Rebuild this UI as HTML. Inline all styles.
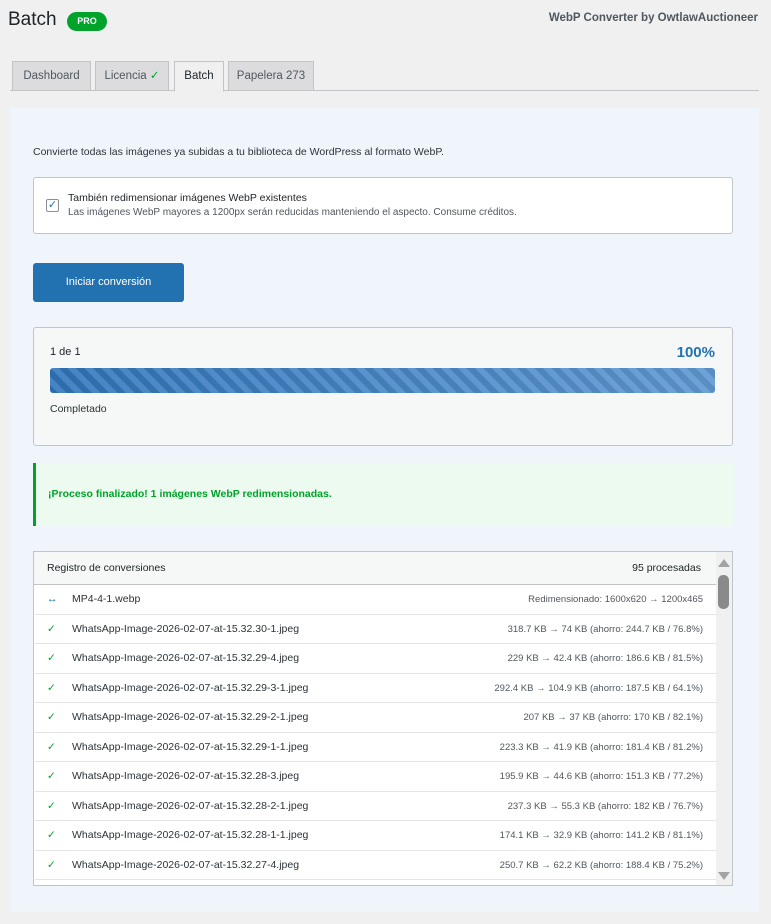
<!DOCTYPE html>
<html><head><meta charset="utf-8"><style>
*{box-sizing:border-box;margin:0;padding:0}
body{width:771px;height:924px;background:#f0f0f1;font-family:"Liberation Sans",sans-serif;color:#1d2327;position:relative;overflow:hidden;font-size:11px}
.abs{position:absolute}
.tab{position:absolute;top:61px;height:30px;border:1px solid #c3c4c7;background:#dcdcde;font-size:11.5px;color:#50575e;line-height:29px;text-align:center}
.row{position:absolute;left:1px;width:681px;height:29.5px;border-bottom:1px solid #e5e5e5;font-size:10.5px;line-height:29px;background:#fff}
.row .i{position:absolute;left:12px;color:#00a32a}
.row .n{position:absolute;left:37px;color:#2c3338}
.row .r{position:absolute;right:13px;color:#50575e;font-size:9.5px}
</style></head><body>
<div class="abs" style="left:8px;top:9px;font-size:19px;color:#1d2327">Batch</div>
<div class="abs" style="left:67px;top:12px;width:40px;height:19px;border-radius:10px;background:#00a32a;color:#fff;font-size:9px;font-weight:bold;text-align:center;line-height:19px">PRO</div>
<div class="abs" style="right:13px;top:12px;font-size:11.5px;font-weight:bold;color:#50575e">WebP Converter by OwtlawAuctioneer</div>
<div class="abs" style="left:10px;top:90px;width:749px;height:1px;background:#c3c4c7"></div>
<div class="tab" style="left:12px;width:79px">Dashboard</div>
<div class="tab" style="left:95px;width:74px">Licencia <span style="color:#00a32a">✓</span></div>
<div class="tab" style="left:174px;width:50px;background:#f0f0f1;border-bottom-color:#f0f0f1;color:#1d2327;height:31px">Batch</div>
<div class="tab" style="left:228px;width:86px">Papelera 273</div>
<div class="abs" style="left:10px;top:108px;width:749px;height:804px;background:#f0f5fc"></div>
<div class="abs" style="left:33px;top:146px;font-size:10.5px;color:#2c3338">Convierte todas las imágenes ya subidas a tu biblioteca de WordPress al formato WebP.</div>
<div class="abs" style="left:33px;top:177px;width:700px;height:57px;background:#fff;border:1px solid #c3c4c7;border-radius:3px"></div>
<div class="abs" style="left:46px;top:199px;width:13px;height:13px;border:1px solid #8c8f94;border-radius:2px;background:#fff;color:#2271b1;font-size:11px;line-height:11px;text-align:center">✓</div>
<div class="abs" style="left:68px;top:192px;font-size:10.5px;color:#1d2327">También redimensionar imágenes WebP existentes</div>
<div class="abs" style="left:68px;top:207px;font-size:10px;color:#50575e">Las imágenes WebP mayores a 1200px serán reducidas manteniendo el aspecto. Consume créditos.</div>
<div class="abs" style="left:33px;top:263px;width:151px;height:39px;background:#2271b1;border-radius:3px;color:#fff;font-size:11px;text-align:center;line-height:39px">Iniciar conversión</div>
<div class="abs" style="left:33px;top:327px;width:700px;height:119px;background:#f6f7f7;border:1px solid #c3c4c7;border-radius:3px"></div>
<div class="abs" style="left:50px;top:346px;font-size:11px;color:#1d2327">1 de 1</div>
<div class="abs" style="right:56px;top:344px;font-size:15px;font-weight:bold;color:#2271b1">100%</div>
<div class="abs" style="left:50px;top:368px;width:665px;height:25px;border-radius:3px;background:repeating-linear-gradient(45deg,#2f72b4 0 6px,#4a8bcd 6px 12px),linear-gradient(90deg,#2a6db0,#5aa0dc);background-blend-mode:normal"></div>
<div class="abs" style="left:50px;top:368px;width:665px;height:25px;border-radius:3px;background:linear-gradient(90deg,rgba(0,0,0,0.05),rgba(255,255,255,0.2))"></div>
<div class="abs" style="left:50px;top:403px;font-size:10.5px;color:#2c3338">Completado</div>
<div class="abs" style="left:33px;top:463px;width:700px;height:63px;background:#edfaef;border-left:3px solid #00a32a"></div>
<div class="abs" style="left:48px;top:488px;font-size:10.5px;font-weight:bold;color:#00a32a">¡Proceso finalizado! 1 imágenes WebP redimensionadas.</div>
<div class="abs" style="left:33px;top:551px;width:700px;height:335px;background:#fff;border:1px solid #c3c4c7;overflow:hidden">
<div class="abs" style="left:0;top:0;width:682px;height:33px;background:#f6f7f7;border-bottom:1px solid #c3c4c7"></div>
<div class="abs" style="left:13px;top:10px;font-size:10.5px;color:#1d2327">Registro de conversiones</div>
<div class="abs" style="right:31px;top:10px;font-size:10.5px;color:#1d2327">95 procesadas</div>
<div class="row" style="top:33px"><span class="i" style="color:#2271b1">↔</span><span class="n">MP4-4-1.webp</span><span class="r">Redimensionado: 1600x620 → 1200x465</span></div>
<div class="row" style="top:62.5px"><span class="i">✓</span><span class="n">WhatsApp-Image-2026-02-07-at-15.32.30-1.jpeg</span><span class="r">318.7 KB → 74 KB (ahorro: 244.7 KB / 76.8%)</span></div>
<div class="row" style="top:92px"><span class="i">✓</span><span class="n">WhatsApp-Image-2026-02-07-at-15.32.29-4.jpeg</span><span class="r">229 KB → 42.4 KB (ahorro: 186.6 KB / 81.5%)</span></div>
<div class="row" style="top:121.5px"><span class="i">✓</span><span class="n">WhatsApp-Image-2026-02-07-at-15.32.29-3-1.jpeg</span><span class="r">292.4 KB → 104.9 KB (ahorro: 187.5 KB / 64.1%)</span></div>
<div class="row" style="top:151px"><span class="i">✓</span><span class="n">WhatsApp-Image-2026-02-07-at-15.32.29-2-1.jpeg</span><span class="r">207 KB → 37 KB (ahorro: 170 KB / 82.1%)</span></div>
<div class="row" style="top:180.5px"><span class="i">✓</span><span class="n">WhatsApp-Image-2026-02-07-at-15.32.29-1-1.jpeg</span><span class="r">223.3 KB → 41.9 KB (ahorro: 181.4 KB / 81.2%)</span></div>
<div class="row" style="top:210px"><span class="i">✓</span><span class="n">WhatsApp-Image-2026-02-07-at-15.32.28-3.jpeg</span><span class="r">195.9 KB → 44.6 KB (ahorro: 151.3 KB / 77.2%)</span></div>
<div class="row" style="top:239.5px"><span class="i">✓</span><span class="n">WhatsApp-Image-2026-02-07-at-15.32.28-2-1.jpeg</span><span class="r">237.3 KB → 55.3 KB (ahorro: 182 KB / 76.7%)</span></div>
<div class="row" style="top:269px"><span class="i">✓</span><span class="n">WhatsApp-Image-2026-02-07-at-15.32.28-1-1.jpeg</span><span class="r">174.1 KB → 32.9 KB (ahorro: 141.2 KB / 81.1%)</span></div>
<div class="row" style="top:298.5px"><span class="i">✓</span><span class="n">WhatsApp-Image-2026-02-07-at-15.32.27-4.jpeg</span><span class="r">250.7 KB → 62.2 KB (ahorro: 188.4 KB / 75.2%)</span></div>
<div class="abs" style="left:682px;top:0;width:17px;height:335px;background:#f0f0f0"></div>
<div class="abs" style="left:684px;top:7px;width:0;height:0;border-left:6px solid transparent;border-right:6px solid transparent;border-bottom:8px solid #a3a3a3"></div>
<div class="abs" style="left:684px;top:320px;width:0;height:0;border-left:6px solid transparent;border-right:6px solid transparent;border-top:8px solid #a3a3a3"></div>
<div class="abs" style="left:684px;top:23px;width:11px;height:34px;border-radius:5px;background:#8a8a8a"></div>
</div>
</body></html>
